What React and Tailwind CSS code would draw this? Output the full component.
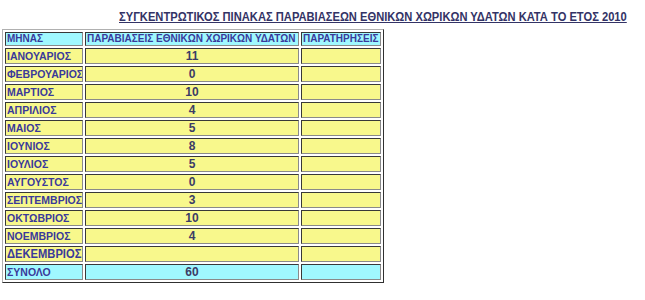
import React from 'react';

// monthly breaches of national waters, 2010
const rows = [
  { month: 'ΙΑΝΟΥΑΡΙΟΣ', count: '11' },
  { month: 'ΦΕΒΡΟΥΑΡΙΟΣ', count: '0' },
  { month: 'ΜΑΡΤΙΟΣ', count: '10' },
  { month: 'ΑΠΡΙΛΙΟΣ', count: '4' },
  { month: 'ΜΑΙΟΣ', count: '5' },
  { month: 'ΙΟΥΝΙΟΣ', count: '8' },
  { month: 'ΙΟΥΛΙΟΣ', count: '5' },
  { month: 'ΑΥΓΟΥΣΤΟΣ', count: '0' },
  { month: 'ΣΕΠΤΕΜΒΡΙΟΣ', count: '3' },
  { month: 'ΟΚΤΩΒΡΙΟΣ', count: '10' },
  { month: 'ΝΟΕΜΒΡΙΟΣ', count: '4' },
  { month: 'ΔΕΚΕΜΒΡΙΟΣ', count: '', big: true },
];

const cell = 'border border-t-[#383838] border-l-[#383838] border-r-[#8a8a8a] border-b-[#8a8a8a] p-0 px-[1px] overflow-hidden whitespace-nowrap';
const yellow = 'bg-[#f8f88c]';
const cyan = 'bg-[#a0f8ff]';

export default function App() {
  return (
    <div className="w-[645px] h-[300px] bg-white overflow-hidden" style={{ fontFamily: '"Liberation Sans", Arial, sans-serif' }}>
      <div className="pl-[119px] pt-[4px] h-[28px] whitespace-nowrap">
        <span className="inline-block origin-left scale-x-[0.93] text-[12px] font-bold underline text-[#333366] leading-[15px]">
          ΣΥΓΚΕΝΤΡΩΤΙΚΟΣ ΠΙΝΑΚΑΣ ΠΑΡΑΒΙΑΣΕΩΝ ΕΘΝΙΚΩΝ ΧΩΡΙΚΩΝ ΥΔΑΤΩΝ ΚΑΤΑ ΤΟ ΕΤΟΣ 2010
        </span>
      </div>

      <table className="table-fixed w-[382px] ml-[2px] mt-[1px] border-separate border-spacing-[2px] border border-t-[#b0b0b0] border-l-[#b0b0b0] border-r-[#303030] border-b-[#303030] text-[#3a3a9a] font-bold">
        <colgroup>
          <col className="w-[78px]" />
          <col className="w-[214px]" />
          <col className="w-[80px]" />
        </colgroup>
        <tbody>
          <tr className="h-[14px] leading-[12px] text-[10px]">
            <td className={`${cell} ${cyan}`}>ΜΗΝΑΣ</td>
            <td className={`${cell} ${cyan}`}>ΠΑΡΑΒΙΑΣΕΙΣ ΕΘΝΙΚΩΝ ΧΩΡΙΚΩΝ ΥΔΑΤΩΝ</td>
            <td className={`${cell} ${cyan}`}>ΠΑΡΑΤΗΡΗΣΕΙΣ</td>
          </tr>
          {rows.map((r) => (
            <tr key={r.month} className="h-[16px]">
              <td className={`${cell} ${yellow} text-[10.5px] leading-[13px]`}>
                {r.big ? (
                  <span className="inline-block origin-left scale-x-[0.86] text-[13px] leading-[13px]">{r.month}</span>
                ) : (
                  r.month
                )}
              </td>
              <td className={`${cell} ${yellow} text-center text-[12px] leading-[13px] text-[#3c3c66]`}>{r.count}</td>
              <td className={`${cell} ${yellow}`}></td>
            </tr>
          ))}
          <tr className="h-[16px]">
            <td className={`${cell} ${cyan} text-[10.5px] leading-[13px]`}>ΣΥΝΟΛΟ</td>
            <td className={`${cell} ${cyan} text-center text-[12px] leading-[13px] text-[#3c3c66]`}>60</td>
            <td className={`${cell} ${cyan}`}></td>
          </tr>
        </tbody>
      </table>
    </div>
  );
}
